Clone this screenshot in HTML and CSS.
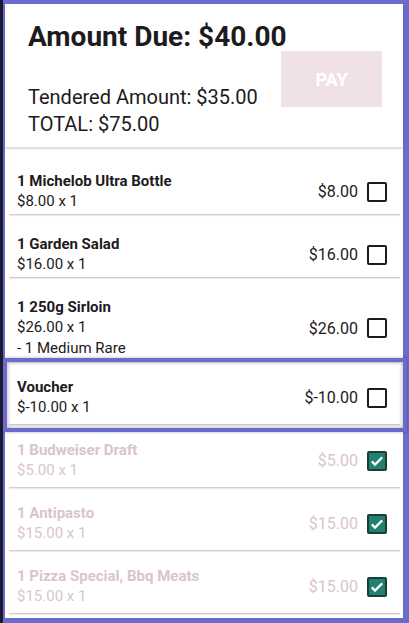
FILE: index.html
```html
<!DOCTYPE html>
<html lang="en">
<head>
  <meta charset="utf-8">
  <meta name="viewport" content="width=device-width, initial-scale=1.0">
  <title>Split Payment</title>
  <link rel="stylesheet" href="styles.css">
</head>
<body>
  <main class="screen">
    <header class="due-card">
      <h1 class="due-title">Amount Due: $40.00</h1>
      <div class="due-amounts">
        <p>Tendered Amount: $35.00</p>
        <p>TOTAL: $75.00</p>
      </div>
      <button type="button" class="pay-btn">PAY</button>
    </header>

    <ul class="items">
      <li class="item">
        <div class="item-info">
          <span class="item-name">1 Michelob Ultra Bottle</span>
          <span class="item-sub">$8.00 x 1</span>
        </div>
        <span class="item-price">$8.00</span>
        <span class="check"></span>
      </li>
      <li class="item">
        <div class="item-info">
          <span class="item-name">1 Garden Salad</span>
          <span class="item-sub">$16.00 x 1</span>
        </div>
        <span class="item-price">$16.00</span>
        <span class="check"></span>
      </li>
      <li class="item">
        <div class="item-info">
          <span class="item-name">1 250g Sirloin</span>
          <span class="item-sub">$26.00 x 1</span>
          <span class="item-sub">- 1 Medium Rare</span>
        </div>
        <span class="item-price">$26.00</span>
        <span class="check"></span>
      </li>
      <li class="item marked">
        <div class="item-info">
          <span class="item-name">Voucher</span>
          <span class="item-sub">$-10.00 x 1</span>
        </div>
        <span class="item-price">$-10.00</span>
        <span class="check"></span>
      </li>
      <li class="item paid">
        <div class="item-info">
          <span class="item-name">1 Budweiser Draft</span>
          <span class="item-sub">$5.00 x 1</span>
        </div>
        <span class="item-price">$5.00</span>
        <span class="check checked">
          <svg viewBox="0 0 20 20" width="16" height="16"><path d="M3.5 10.5l4 4 9-9" fill="none" stroke="#fff" stroke-width="2.8"/></svg>
        </span>
      </li>
      <li class="item paid">
        <div class="item-info">
          <span class="item-name">1 Antipasto</span>
          <span class="item-sub">$15.00 x 1</span>
        </div>
        <span class="item-price">$15.00</span>
        <span class="check checked">
          <svg viewBox="0 0 20 20" width="16" height="16"><path d="M3.5 10.5l4 4 9-9" fill="none" stroke="#fff" stroke-width="2.8"/></svg>
        </span>
      </li>
      <li class="item paid">
        <div class="item-info">
          <span class="item-name">1 Pizza Special, Bbq Meats</span>
          <span class="item-sub">$15.00 x 1</span>
        </div>
        <span class="item-price">$15.00</span>
        <span class="check checked">
          <svg viewBox="0 0 20 20" width="16" height="16"><path d="M3.5 10.5l4 4 9-9" fill="none" stroke="#fff" stroke-width="2.8"/></svg>
        </span>
      </li>
    </ul>
  </main>
</body>
</html>
```

FILE: styles.css
```css
body {
  margin: 0;
  height: 623px;
  box-sizing: border-box;
  padding: 4px 6px 5px 2px;
  border-left: 3px solid #1c1a2e;
  background-color: #6b6bcc;
  font-family: Roboto, "Liberation Sans", sans-serif;
  color: #1d1a20;
  overflow: hidden;
}
.screen {
  background-color: #ffffff;
  height: 614px;
}
.due-card {
  display: grid;
  grid-template-columns: 1fr 101px;
  padding: 18px 21px 9px 23px;
  background-color: #ffffff;
  box-shadow: 0 2px 2px rgba(0, 0, 0, 0.15);
}
.due-title {
  grid-column: 1 / -1;
  margin: 0;
  font-size: 28px;
  line-height: 30px;
  font-weight: 700;
}
.due-amounts {
  padding-top: 32px;
}
.due-amounts p {
  margin: 0;
  font-size: 20px;
  line-height: 27px;
}
.pay-btn {
  align-self: start;
  height: 56px;
  margin-top: -1px;
  border: none;
  background-color: #f0e1e7;
  color: #ffffff;
  font-family: Roboto, "Liberation Sans", sans-serif;
  font-size: 18px;
  font-weight: 700;
}
.items {
  list-style: none;
  margin: 5px 0 0;
  padding: 0;
}
.item {
  position: relative;
  display: flex;
  align-items: center;
  margin: 0 3px 0 4px;
  padding: 19px 13px 2px 8px;
  border-bottom: 1px solid #d4ced2;
  box-shadow: 0 1px 1px rgba(0, 0, 0, 0.08);
}
.item.marked, .item.paid {
  padding-top: 15px;
  padding-bottom: 6px;
}
.item-info {
  flex: 1;
  display: flex;
  flex-direction: column;
}
.item-name {
  font-size: 15px;
  line-height: 20px;
  font-weight: 700;
}
.item-sub {
  font-size: 15px;
  line-height: 21px;
}
.item-price {
  font-size: 16px;
  margin-right: 9px;
}
.check {
  width: 16px;
  height: 16px;
  border: 2px solid #1d1a20;
  border-radius: 2px;
  display: flex;
  align-items: center;
  justify-content: center;
}
.check.checked {
  background-color: #21806f;
  border-color: #1d3e38;
}
.paid .item-name, .paid .item-sub, .paid .item-price {
  color: #d9c4d1;
}
.marked::after {
  content: "";
  position: absolute;
  top: -4px;
  left: -6px;
  right: -7px;
  bottom: -8px;
  border: 4px solid #6b6bcc;
  box-shadow: inset 0 0 4px rgba(0, 0, 0, 0.35), 0 0 3px rgba(0, 0, 0, 0.3);
}
```
